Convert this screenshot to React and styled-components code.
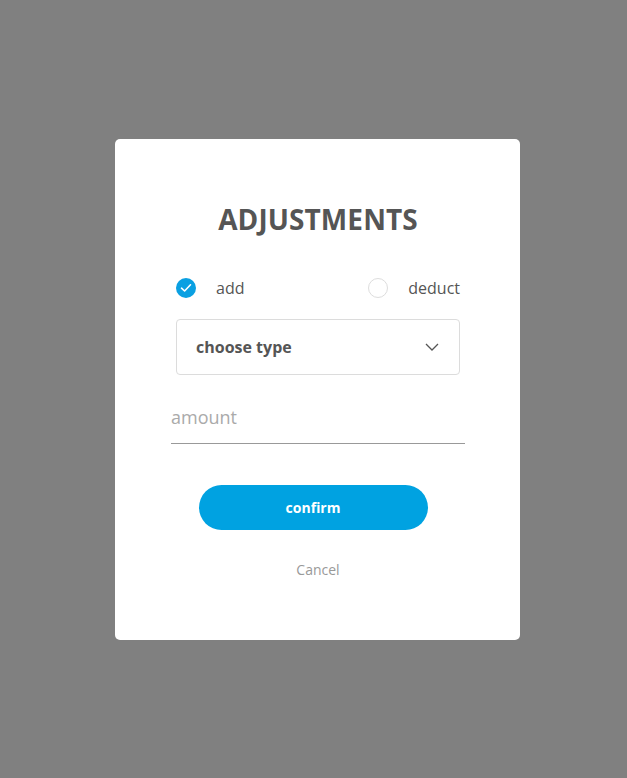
import React, { useState } from "react";
import styled, { createGlobalStyle } from "styled-components";

const GlobalStyle = createGlobalStyle`
  html, body {
    margin: 0;
    padding: 0;
    font-family: "Open Sans", "Noto Sans", sans-serif;
  }
`;

const Overlay = styled.div`
  width: 627px;
  height: 778px;
  background: #808080;
  display: flex;
  align-items: center;
  justify-content: center;
  padding-left: 8px;
  box-sizing: border-box;
`;

const Modal = styled.div`
  width: 405px;
  height: 501px;
  box-sizing: border-box;
  background: #fff;
  border-radius: 5px;
  padding: 58px 55px 0 56px;
  display: flex;
  flex-direction: column;
  align-items: center;
`;

const Title = styled.h1`
  margin: 0;
  font-size: 28px;
  font-weight: 700;
  color: #555;
  line-height: 44px;
  letter-spacing: 0.1px;
`;

const RadioRow = styled.div`
  width: 284px;
  margin-top: 36px;
  display: flex;
  justify-content: space-between;
`;

const RadioOption = styled.label`
  display: flex;
  align-items: center;
  gap: 20px;
  font-size: 16px;
  color: #555;
  cursor: pointer;
  line-height: 22px;
`;

const RadioDot = styled.span`
  width: 20px;
  height: 20px;
  border-radius: 50%;
  box-sizing: border-box;
  display: flex;
  align-items: center;
  justify-content: center;
  background: ${(p) => (p.checked ? "#0aa0e2" : "#fff")};
  border: ${(p) => (p.checked ? "none" : "1px solid #ddd")};
`;

const Select = styled.div`
  width: 284px;
  height: 56px;
  box-sizing: border-box;
  margin-top: 20px;
  border: 1px solid #dcdcdc;
  border-radius: 4px;
  padding: 0 20px 0 19px;
  display: flex;
  align-items: center;
  justify-content: space-between;
  font-size: 16px;
  font-weight: 700;
  color: #555;
`;

const AmountInput = styled.input`
  width: 294px;
  margin-top: 24px;
  border: none;
  border-bottom: 1px solid #999;
  padding: 6px 0 14px;
  font-family: inherit;
  font-size: 18px;
  color: #555;
  outline: none;
  &::placeholder {
    color: #aaa;
  }
`;

const ConfirmButton = styled.button`
  width: 229px;
  height: 45px;
  margin: 41px 10px 0 0;
  border: none;
  border-radius: 23px;
  background: #00a2e1;
  color: #fff;
  font-family: inherit;
  font-size: 14px;
  font-weight: 700;
  cursor: pointer;
`;

const CancelLink = styled.button`
  margin-top: 29px;
  border: none;
  background: none;
  font-family: inherit;
  font-size: 14px;
  color: #999;
  cursor: pointer;
`;

const Check = () => (
  <svg width="12" height="10" viewBox="0 0 12 10">
    <path d="M1.5 5.2 L4.6 8 L10.5 1.8" fill="none" stroke="#fff" strokeWidth="1.6" strokeLinecap="round" strokeLinejoin="round" />
  </svg>
);

const Chevron = () => (
  <svg width="14" height="8" viewBox="0 0 14 8">
    <path d="M1 1 L7 7 L13 1" fill="none" stroke="#555" strokeWidth="1.3" />
  </svg>
);

const App = () => {
  const [mode, setMode] = useState("add");
  return (
    <Overlay>
      <GlobalStyle />
      <Modal>
        <Title>ADJUSTMENTS</Title>
        <RadioRow>
          <RadioOption onClick={() => setMode("add")}>
            <RadioDot checked={mode === "add"}>{mode === "add" && <Check />}</RadioDot>
            add
          </RadioOption>
          <RadioOption onClick={() => setMode("deduct")}>
            <RadioDot checked={mode === "deduct"}>{mode === "deduct" && <Check />}</RadioDot>
            deduct
          </RadioOption>
        </RadioRow>
        <Select>
          choose type
          <Chevron />
        </Select>
        <AmountInput placeholder="amount" />
        <ConfirmButton>confirm</ConfirmButton>
        <CancelLink>Cancel</CancelLink>
      </Modal>
    </Overlay>
  );
};

export default App;
